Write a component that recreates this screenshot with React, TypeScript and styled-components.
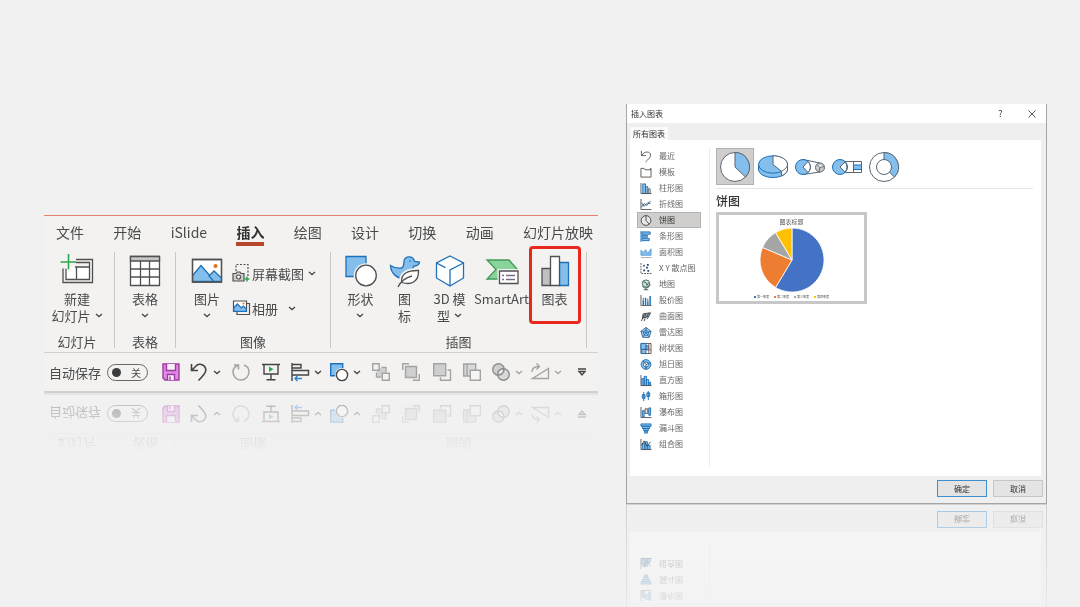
import React from 'react';
import styled, { createGlobalStyle, css } from 'styled-components';

const GlobalStyle = createGlobalStyle`
  * { box-sizing: border-box; }
  body {
    margin: 0;
    background: #f1f1f1;
    overflow: hidden;
    font-family: "Noto Sans CJK SC", "Noto Sans", sans-serif;
    color: #4a4a4a;
  }
  button {
    font: inherit;
    color: inherit;
    border: 0;
    padding: 0;
    margin: 0;
    background: none;
  }
  svg { display: block; overflow: visible; flex: none; }
`;

const Page = styled.main`
  display: grid;
  grid-template-columns: 554fr 421fr;
  gap: 28px;
  align-items: start;
  min-height: 100vh;
  padding: 104px 33px 0 44px;
`;

/* ---------- Ribbon ---------- */

const Ribbon = styled.section`
  margin-top: 111px;
  background: #f3f2f1;
  border-bottom: 2px solid #d3d1d0;
  font-size: 13px;
  line-height: 17px;
  -webkit-box-reflect: below 0
    linear-gradient(to top, rgba(0, 0, 0, 0.38), rgba(0, 0, 0, 0.22) 28px, rgba(0, 0, 0, 0.12) 44px, transparent 58px);
`;

const Tabs = styled.nav`
  display: flex;
  justify-content: space-between;
  padding: 6px 5px 4px 12px;
  border-top: 1px solid #e8806e;
`;

const Tab = styled.button<{ $active?: boolean }>`
  font-size: 14px;
  line-height: 20px;
  border-bottom: 4px solid transparent;
  ${(p) =>
    p.$active &&
    css`
      font-weight: 700;
      color: #333;
      border-color: #b7472a;
    `}
`;

const Groups = styled.div`
  display: flex;
  height: 102px;
  padding-right: 11px;
`;

const Group = styled.div<{ $weight: number }>`
  flex: ${(p) => p.$weight} 1 0;
  min-width: 0;
  display: flex;
  flex-direction: column;
  justify-content: space-between;
  padding-top: 6px;
  &:first-child { padding-right: 4px; }
`;

const GroupTools = styled.div`
  display: flex;
  justify-content: center;
  align-items: flex-start;
`;

const GroupName = styled.div`
  text-align: center;
  line-height: 20px;
`;

const Divider = styled.span`
  width: 1px;
  margin: 2px 0 4px;
  background: #c9c7c6;
`;

const BigButton = styled.button<{ $width: number; $marked?: boolean }>`
  position: relative;
  display: flex;
  flex-direction: column;
  align-items: center;
  gap: 4px;
  width: ${(p) => p.$width}px;
  white-space: nowrap;
  ${(p) =>
    p.$marked &&
    css`
      &::after {
        content: '';
        position: absolute;
        inset: -10px -2px -17px;
        border: 3px solid #e8271d;
        border-radius: 4px;
      }
    `}
`;

const Lines = styled.span`
  display: flex;
  flex-direction: column;
  align-items: center;
`;

const Line = styled.span`
  display: flex;
  align-items: center;
  gap: 4px;
  height: 17px;
`;

const SmallTools = styled.div`
  display: flex;
  flex-direction: column;
  gap: 15px;
  padding: 7px 4px 0 5px;
`;

const SmallButton = styled.button<{ $gap: number }>`
  display: flex;
  align-items: center;
  gap: 3px;
  height: 20px;
  white-space: nowrap;
  & > svg:last-child { margin-left: ${(p) => p.$gap}px; }
`;

const QuickBar = styled.div`
  display: flex;
  align-items: center;
  justify-content: space-between;
  height: 39px;
  padding: 0 5px;
  border-top: 1px solid #d3d1d0;
`;

const AutoSave = styled.label`
  display: flex;
  align-items: center;
  gap: 6px;
  margin-right: 3px;
`;

const Switch = styled.span`
  display: flex;
  align-items: center;
  justify-content: space-between;
  width: 41px;
  height: 17px;
  padding: 0 6px 0 4px;
  border: 1px solid #666;
  border-radius: 9px;
  font-size: 10px;
`;

const SwitchInput = styled.input`
  appearance: none;
  width: 9px;
  height: 9px;
  margin: 0;
  border-radius: 50%;
  background: #3d3d3d;
`;

const QuickButton = styled.button<{ $split?: boolean; $dim?: boolean }>`
  display: flex;
  align-items: center;
  justify-content: ${(p) => (p.$split ? 'space-between' : 'center')};
  width: ${(p) => (p.$split ? 31 : 22)}px;
  height: 22px;
  color: ${(p) => (p.$dim ? '#a3a3a3' : '#444')};
`;

/* ---------- Dialog ---------- */

const Dialog = styled.section`
  background: #efefef;
  border: solid #a5a5a5;
  border-width: 0 1px 1px;
  font-size: 8px;
  line-height: 12px;
  color: #333;
  -webkit-box-reflect: below 0 linear-gradient(to top, rgba(0, 0, 0, 0.42), rgba(0, 0, 0, 0.12) 104px);
`;

const TitleBar = styled.header`
  display: flex;
  align-items: center;
  height: 19px;
  padding: 0 10px 0 4px;
  background: #fff;
`;

const Title = styled.h1`
  flex: 1;
  margin: 0;
  font-size: 8px;
  line-height: 16px;
  font-weight: 400;
`;

const TitleButton = styled.button`
  display: grid;
  place-items: center;
  width: 9px;
  margin-left: 22px;
  font-size: 9px;
`;

const DialogTab = styled.button`
  display: block;
  height: 13px;
  margin: 4px 0 0 3px;
  padding: 0 3px;
  background: #fafafa;
`;

const Panel = styled.div`
  display: flex;
  height: 336px;
  margin: 0 5px 0 3px;
  padding: 8px 8px 10px 7px;
  background: #fff;
`;

const Sidebar = styled.ul`
  width: 73px;
  margin: 0;
  padding: 0 8px 0 0;
  border-right: 1px solid #ececec;
  list-style: none;
`;

const SideItem = styled.button<{ $selected?: boolean }>`
  display: flex;
  align-items: center;
  gap: 7px;
  width: 100%;
  height: 16px;
  padding: 0 2px;
  border: 1px solid ${(p) => (p.$selected ? '#b3b1b1' : 'transparent')};
  background: ${(p) => (p.$selected ? '#cfcecd' : 'none')};
  color: ${(p) => (p.$selected ? '#333' : '#666')};
  white-space: nowrap;
`;

const Content = styled.div`
  flex: 1;
  padding-left: 6px;
`;

const TypeRow = styled.div`
  display: flex;
  padding-bottom: 3px;
  border-bottom: 1px solid #e6e6e6;
`;

const TypeButton = styled.button<{ $selected?: boolean }>`
  display: grid;
  place-items: center;
  width: ${(p) => (p.$selected ? 38 : 37)}px;
  height: 37px;
  border: 1px solid ${(p) => (p.$selected ? '#b3b1b1' : 'transparent')};
  background: ${(p) => (p.$selected ? '#cfcecd' : 'none')};
`;

const Heading = styled.h2`
  margin: 4px 0 3px;
  font-size: 12px;
  line-height: 16px;
  font-weight: 500;
`;

const Preview = styled.figure`
  display: flex;
  flex-direction: column;
  align-items: center;
  width: 151px;
  height: 92px;
  margin: 0;
  padding-top: 2px;
  border: 3px solid #c8c7c7;
  background: #fff;
`;

const PreviewTitle = styled.figcaption`
  font-size: 6px;
  line-height: 10px;
  color: #555;
`;

const Legend = styled.div`
  display: flex;
  gap: 5px;
  margin-top: 1px;
  font-size: 3px;
  line-height: 6px;
  color: #555;
`;

const LegendItem = styled.span<{ $color: string }>`
  display: flex;
  align-items: center;
  gap: 1px;
  &::before {
    content: '';
    width: 2px;
    height: 2px;
    background: ${(p) => p.$color};
  }
`;

const Footer = styled.footer`
  display: flex;
  justify-content: flex-end;
  gap: 6px;
  padding: 4px 3px 6px;
`;

const DialogButton = styled.button<{ $primary?: boolean }>`
  width: 50px;
  height: 17px;
  border: 1px solid ${(p) => (p.$primary ? '#3f8fce' : '#c6c6c6')};
  background: #e4e4e4;
`;

/* ---------- Icons ---------- */

const BLUE = '#83beec';
const EDGE = '#1e70b8';
const INK = '#505050';

const Chevron = () => (
  <svg width="8" height="5" viewBox="0 0 8 5" fill="none" stroke="currentColor" strokeWidth="1.3">
    <path d="M1 1l3 2.6L7 1" />
  </svg>
);

const Big = ({ children }: { children: React.ReactNode }) => (
  <svg width="30" height="30" viewBox="0 0 30 30" fill="none" stroke={INK} strokeWidth="1.3">
    {children}
  </svg>
);

const NewSlideIcon = () => (
  <Big>
    <path d="M4 11h23v13H4z" fill="#fff" stroke="none" />
    <path d="M14 3.500h16.500v23H1V12.500M14 6.500h13.500v17H4V12.500M13 11h14.500M14.500 11v12.500" />
    <path d="M6.500 -2v15.500M-1.500 6h15.500" stroke="#2ca84a" strokeWidth="1.600" />
  </Big>
);

const TableIcon = () => (
  <Big>
    <path d="M.5.500h29v29H.5z" fill="#fff" />
    <path d="M.5.500h29v4.500H.5z" fill="#c9c7c6" />
    <path d="M.5 13h29M.5 21h29M10.500 5v24.500M19.500 5v24.500" />
  </Big>
);

const PictureIcon = () => (
  <Big>
    <path d="M.5 3.500h29v22.500H.5z" fill="#fff" />
    <path d="M.6 19.500L9 9.500l14 16H.6z" fill={BLUE} stroke={EDGE} />
    <path d="M17 20l5-5 7.400 7v3.400h-7.500z" fill={BLUE} stroke={EDGE} />
    <circle cx="23.500" cy="10" r="2" fill="#e0701c" stroke="none" />
    <path d="M.5 3.500h29v22.500H.5z" />
  </Big>
);

const ShapesIcon = () => (
  <Big>
    <path d="M0 .5h20v20H0z" fill={BLUE} stroke={EDGE} />
    <circle cx="20" cy="19.500" r="12.300" fill="#f3f2f1" stroke="none" />
    <circle cx="20" cy="19.500" r="10.300" fill="#fff" />
  </Big>
);

const DuckLeafIcon = () => (
  <Big>
    <path
      d="M.5 9.500c4 2.500 8 3 11 2.500 3-1 2-3.500 2.500-7C15-.2 23-.8 24.500 5.500l5 .5c0 2.500-3 4-5.500 4l-2 4-8 8.500c-6 0-13-4-13.500-13z"
      fill={BLUE}
      stroke={EDGE}
    />
    <path
      d="M28.500 14.500c-10-.3-18.500 3-16.500 12 9.500 3 17-1 16.500-12z"
      fill="#f3f2f1"
      stroke="#f3f2f1"
      strokeWidth="5"
    />
    <path d="M28.500 14.500c-10-.3-18.500 3-16.500 12 9.500 3 17-1 16.500-12z" fill="#fff" />
    <path d="M8 31c3-6 8-9.500 14-11" />
    <circle cx="20" cy="5" r=".8" fill={EDGE} stroke="none" />
  </Big>
);

const CubeIcon = () => (
  <Big>
    <path d="M15 0l13.500 7v15L15 30 1.500 22V7z" fill="#fff" stroke={EDGE} />
    <path d="M1.500 7l9 4.700M15 30V14l13.500-7" stroke={EDGE} />
  </Big>
);

const SmartArtIcon = () => (
  <Big>
    <path d="M0 4h22l8 9v10H0l9-9.500z" fill="#8ad39a" stroke="#3f9b57" />
    <path d="M12.500 15h18.500v12.500H12.500z" fill="#f3f2f1" stroke="#f3f2f1" strokeWidth="4" />
    <path d="M12.500 15h18.500v12.500H12.500z" fill="#fff" />
    <path d="M15 19.500h2m2 0h9M15 23.500h2m2 0h9" stroke="#7d6b8e" />
  </Big>
);

const ChartIcon = () => (
  <Big>
    <path d="M2 12.500h8.500v17H2z" fill="#c2c0bf" />
    <path d="M19.500 6.500h9v23h-9z" fill={BLUE} stroke={EDGE} />
    <path d="M10.500 .5h9v29h-9z" fill="#fff" />
  </Big>
);

const ScreenshotIcon = () => (
  <svg width="16" height="18" viewBox="0 0 16 18" fill="none" stroke={INK} strokeWidth="1.200">
    <path d="M3 7V.5h12V12" strokeDasharray="2 1.500" />
    <path d="M0 9.500h3l1-1.500h3l1 1.500h3V17H0z" fill="#cfcdcc" />
    <circle cx="5.500" cy="13" r="2" fill="#fff" />
    <path d="M14 12.500v5M11.500 15h5" stroke="#2ca84a" strokeWidth="1.500" />
  </svg>
);

const AlbumIcon = () => (
  <svg width="16" height="16" viewBox="0 0 16 16" fill="none" stroke={INK} strokeWidth="1.200">
    <path d="M13.500 3.500H16.500V14.500H4V12" />
    <path d="M.5 1h13v10.500H.5z" fill="#fff" />
    <path d="M.8 8l3.500-4 4 4 2-2 3 3v2.300H.8z" fill={BLUE} stroke={EDGE} />
    <circle cx="10.500" cy="3.500" r="1" fill="#e0701c" stroke="none" />
  </svg>
);

const Quick = ({ children, stroke = 'currentColor' }: { children: React.ReactNode; stroke?: string }) => (
  <svg width="18" height="18" viewBox="0 0 18 18" fill="none" stroke={stroke} strokeWidth="1.400">
    {children}
  </svg>
);

const SaveIcon = () => (
  <Quick stroke="#a03aa5">
    <path d="M1 1h16v16H3l-2-2z" fill="#dc8be0" />
    <path d="M4.500 1v6.500h9V1" fill="#f7f0f7" />
    <path d="M5.500 17v-5.500h7V17" fill="#f7f0f7" />
    <path d="M8 13.500V17" />
  </Quick>
);

const UndoIcon = () => (
  <Quick>
    <path d="M1.500 1v6.500H8M2 7l4.500-4.500C10-.2 16 2 15.800 7.500 15.700 10 14 12 8.500 17.500" strokeWidth="1.600" />
  </Quick>
);

const RedoIcon = () => (
  <Quick>
    <path d="M2 2h4.500v4.500M6 2.500C2 4 .8 7 1 9.500c.4 4.500 4 7.500 8 7.500s8-3.500 8-8c0-3-2-6-5-7" strokeWidth="1.500" />
  </Quick>
);

const PresentIcon = () => (
  <Quick>
    <path d="M0 1.500h18M2 1.500v9.500h14V1.500M9 11v5.500M4.500 16.800h9" />
    <path d="M7 3.500l4.500 2.700L7 9z" fill="#2ca84a" stroke="none" />
  </Quick>
);

const AlignIcon = () => (
  <Quick>
    <path d="M1 0v18M1 1.500h9V5H1M1 7.500h16.500v4.500H1" />
    <path d="M4 15.500h7M6.500 13L4 15.500 6.500 18" stroke="#2a86d0" />
  </Quick>
);

const MiniShapesIcon = () => (
  <Quick>
    <path d="M.7.700h12v12H.7z" fill={BLUE} stroke={EDGE} />
    <circle cx="12" cy="12" r="7" fill="#f3f2f1" stroke="none" />
    <circle cx="12" cy="12" r="5.600" fill="#fff" />
  </Quick>
);

const RegroupIcon = () => (
  <Quick>
    <path d="M9.500 4.500h4.500v5M4.500 9.500V14h5" />
    <path d="M5 5h8v8H5z" fill="#cfcfcf" stroke="none" />
    <path d="M.7.700h6.500v6.500H.7zM10.300 10.300h7v7h-7z" fill="#f3f2f1" />
  </Quick>
);

const BringFrontIcon = () => (
  <Quick>
    <path d="M7 .7H.7V7M17.300 11v6.300h-6.500" />
    <path d="M3.500 3.500h11v11h-11z" fill="#cfcfcf" />
  </Quick>
);

const BringForwardIcon = () => (
  <Quick>
    <path d="M14.500 7h3v10.300h-10v-3" />
    <path d="M.7.700h12v12H.7z" fill="#cfcfcf" />
  </Quick>
);

const SendBackIcon = () => (
  <Quick>
    <path d="M.7 1h12v12H.7z" fill="#d8d8d8" />
    <path d="M7.300 7.300h10v10h-10z" fill="#f6f5f4" />
    <path d="M4 1v12" />
  </Quick>
);

const MergeIcon = () => (
  <Quick stroke="#8d8d8d">
    <circle cx="6.500" cy="6.500" r="5.800" fill="#cfcfcf" />
    <circle cx="11.500" cy="11.500" r="5.800" fill="#cfcfcf" fillOpacity=".7" />
    <path d="M11.900 5.700a5.800 5.800 0 0 1-6.200 6.200 5.800 5.800 0 0 1 6.200-6.200z" fill="#f3f2f1" />
  </Quick>
);

const RotateIcon = () => (
  <Quick>
    <path d="M17.500 5.500v10H1.500z" />
    <path d="M1 9c0-4 2-5.500 7-5.500M5.500.5l3 3-3 3" />
  </Quick>
);

const MoreIcon = () => (
  <svg width="10" height="8" viewBox="0 0 10 8" fill="none" stroke="currentColor" strokeWidth="1.400">
    <path d="M1 1h8M2 3.500h6L5 7z" />
  </svg>
);

const Axis = () => <path d="M.5 0v11.500H12" stroke="#555" />;

const sideArt: Record<string, React.ReactNode> = {
  最近: <path d="M1 0v5H6M1.500 4.500C4 0 11 0 11 4.500 11 7 8.500 9 5.500 12" stroke="#555" />,
  模板: <path d="M.5 1.500H4l1 1.500h6V1.500h.5v9.500H.5z" stroke="#555" />,
  柱形图: (
    <>
      <path d="M2.500 1h3v10.500h-3z" fill={BLUE} />
      <path d="M5.500 4H8v7.500H5.500z" fill={BLUE} />
      <path d="M8.500 6.500h2v5h-2z" fill="#fff" stroke="#555" />
      <Axis />
    </>
  ),
  折线图: (
    <>
      <path d="M1 9l3-4 3 2 4-5" />
      <path d="M1 4l3 4 4-4 3 1" stroke="#555" />
      <Axis />
    </>
  ),
  饼图: (
    <>
      <circle cx="6" cy="6" r="5.300" fill="#e8e8e8" stroke="#444" />
      <path d="M6 .7V6l3.500 4" stroke="#444" />
    </>
  ),
  条形图: <path d="M1.500 1h9v2.500h-9zM1.500 4.800h6v2h-6zM1.500 8h8v2.500h-8zM.5 0v12" fill={BLUE} />,
  面积图: (
    <>
      <path d="M.5 9V3.500L3 6l2.500-3L8 7l3.500-5v7z" fill={BLUE} stroke="#5a9fd6" />
      <path d="M.5 11.500H12" stroke="#aaa" />
    </>
  ),
  'X Y 散点图': (
    <>
      <path d="M3 3h1.500M7 2h2M6 5h2M3 8h2M7.500 8.500h2" stroke="#26476b" strokeWidth="2" />
      <path d="M.5 0v11.500H12" stroke="#555" strokeDasharray="2 1" />
    </>
  ),
  地图: (
    <>
      <circle cx="6" cy="5" r="4" fill="#cfe3d8" stroke="#3c5f59" />
      <path d="M3 3l3 1 1 3 2-3M2 8c2 3 8 2 8.500-2M6 10v2M3.500 11.700h5" stroke="#3c5f59" />
    </>
  ),
  股价图: (
    <>
      <path d="M3 6v5M5.500 3v8M8 7v4M10.500 1v10" strokeWidth="1.600" />
      <path d="M3 3v3M8 4v3" stroke="#555" />
      <Axis />
    </>
  ),
  曲面图: (
    <>
      <path d="M3 3l8-1-2 4-7 2z" fill="#8aa9bb" stroke="#444" />
      <path d="M1 11l3-7M5 8l-1 3M9 6L7 9M6 2.500L4.500 7M9 2L7 6.500" stroke="#444" />
    </>
  ),
  雷达图: (
    <>
      <path d="M6 .5l5.500 4.200-2 6.600h-7l-2-6.600z" fill="#b6d9f2" stroke="#38607f" />
      <path d="M6 3l3 2.500L8 9H4L3 5.500zM6 .5V6M11.500 4.700L6 6l3.500 5M2.500 11L6 6 .5 4.700" />
    </>
  ),
  树状图: (
    <>
      <path d="M.5.500h11v11H.5z" fill="#fff" stroke="#555" />
      <path d="M.5.500H6V7H.5zM6 3h3v4H6zM1 7h5v4.500H1z" fill={BLUE} />
      <path d="M9 .5v11M6 7.500h5.500" stroke="#8a5a4a" />
    </>
  ),
  旭日图: (
    <>
      <circle cx="6" cy="6" r="5.300" fill={BLUE} />
      <circle cx="6" cy="6" r="2.800" fill="#fff" />
      <path d="M6 6l5-2M6 6v5.300M6 6L2.500 2" stroke="#3b5568" />
    </>
  ),
  直方图: (
    <>
      <path d="M1.500 4h2.500v7.500H1.500zM4 1.500h2.500v10H4zM6.500 5H9v6.500H6.500zM9 8h2v3.500H9z" fill={BLUE} />
      <Axis />
    </>
  ),
  箱形图: <path d="M3.500 1v10M2 4h3v4H2zM8.500 0v10M7 2h3v4H7z" fill={BLUE} />,
  瀑布图: (
    <>
      <path d="M2 4h2v7H2zM9 1h2v8H9z" fill={BLUE} />
      <path d="M5 2h3v5H5z" fill="#ddd" stroke="#555" />
      <Axis />
    </>
  ),
  漏斗图: <path d="M.5 1h11v2.500H.5zM2 3.500h8V6H2zM3.500 6h5v2.500h-5zM4.500 8.500h3V11h-3z" fill={BLUE} />,
  组合图: (
    <>
      <path d="M2 5h2.500v6.500H2zM5 3h2.500v8.500H5zM8 7h2.500v4.500H8z" fill={BLUE} />
      <path d="M1 7l3-5 3 6 4-5" stroke="#444" />
      <Axis />
    </>
  ),
};

const SideIcon = ({ name }: { name: string }) => (
  <svg width="12" height="11" viewBox="0 0 12 12" fill="none" stroke={EDGE} strokeWidth="1">
    {sideArt[name]}
  </svg>
);

const TypeArt = ({ children }: { children: React.ReactNode }) => (
  <svg width="30" height="30" viewBox="0 0 30 30" fill="#fff" stroke="#5b6670" strokeWidth="1">
    {children}
  </svg>
);

const chartTypes: { name: string; art: React.ReactNode }[] = [
  {
    name: '饼图',
    art: (
      <>
        <circle cx="15" cy="15" r="14.500" />
        <path d="M15 .5a14.500 14.500 0 0 1 10.500 24.500L15 15z" fill={BLUE} />
      </>
    ),
  },
  {
    name: '三维饼图',
    art: (
      <>
        <path d="M.5 12.500v4.500c0 5 6.500 8.500 14.500 8.500S29.500 22 29.500 17v-4.500z" fill={BLUE} stroke={EDGE} />
        <ellipse cx="15" cy="12.500" rx="14.500" ry="8.700" fill={BLUE} stroke={EDGE} />
        <path d="M15 3.800c8 0 14.500 3.900 14.500 8.700v4.500c0 3-2 5-6 6.800v-4.500L15 12.500z" />
        <path d="M29.500 12.500c0 2.500-2.500 5-6 6.800" fill="none" />
      </>
    ),
  },
  {
    name: '子母饼图',
    art: (
      <>
        <path d="M8 7.500l17 3.500v9l-17 2.500z" />
        <circle cx="8" cy="15" r="7.500" fill={BLUE} stroke={EDGE} />
        <path d="M8 15l5-5.500a7.500 7.500 0 0 1 0 11z" />
        <circle cx="25" cy="15.500" r="4.500" fill="#ccc" />
        <path d="M22 12.500l3 3 4-1M25 15.500l-1 4" />
      </>
    ),
  },
  {
    name: '复合条饼图',
    art: (
      <>
        <path d="M8 9.500h21.500v11H8z" />
        <circle cx="8" cy="15" r="7.500" fill={BLUE} stroke={EDGE} />
        <path d="M8 15l5-5a7.500 7.500 0 0 1 0 10z" />
        <path d="M21.500 13h8v4.500h-8z" fill={BLUE} stroke={EDGE} />
        <path d="M21.500 9.500v11" />
      </>
    ),
  },
  {
    name: '圆环图',
    art: (
      <>
        <circle cx="15" cy="15" r="14.500" />
        <path d="M15 .5a14.500 14.500 0 0 1 10.500 24.500L15 15z" fill={BLUE} />
        <circle cx="15" cy="15" r="7.500" />
      </>
    ),
  },
];

const series = [
  { name: '第一季度', value: 8.2, color: '#4472c4' },
  { name: '第二季度', value: 3.2, color: '#ed7d31' },
  { name: '第三季度', value: 1.4, color: '#a5a5a5' },
  { name: '第四季度', value: 1.2, color: '#ffc000' },
];

const PieChart = () => {
  const total = series.reduce((sum, s) => sum + s.value, 0);
  const point = (v: number) => {
    const a = (v / total) * Math.PI * 2;
    return `${33 + 32 * Math.sin(a)} ${33 - 32 * Math.cos(a)}`;
  };
  let start = 0;
  return (
    <svg width="66" height="66" viewBox="0 0 66 66" stroke="#fff" strokeWidth=".8">
      {series.map((s) => {
        const from = start;
        start += s.value;
        const large = s.value > total / 2 ? 1 : 0;
        return (
          <path key={s.name} fill={s.color} d={`M33 33L${point(from)}A32 32 0 ${large} 1 ${point(start)}z`} />
        );
      })}
    </svg>
  );
};

/* ---------- Composition ---------- */

const ribbonTabs = ['文件', '开始', 'iSlide', '插入', '绘图', '设计', '切换', '动画', '幻灯片放映'];

type ToolProps = { icon: React.ReactNode; lines: string[]; width: number; menu?: boolean; marked?: boolean };

/* An empty last line carries only the menu arrow. */
const Tool = ({ icon, lines, width, menu, marked }: ToolProps) => (
  <BigButton type="button" $width={width} $marked={marked}>
    {icon}
    <Lines>
      {lines.map((text, i) => (
        <Line key={i}>
          {text}
          {menu && i === lines.length - 1 && <Chevron />}
        </Line>
      ))}
    </Lines>
  </BigButton>
);

const quickTools: { name: string; icon: React.ReactNode; split?: boolean; dim?: boolean }[] = [
  { name: '保存', icon: <SaveIcon /> },
  { name: '撤消', icon: <UndoIcon />, split: true },
  { name: '重复', icon: <RedoIcon />, dim: true },
  { name: '从头开始', icon: <PresentIcon /> },
  { name: '对齐', icon: <AlignIcon />, split: true },
  { name: '形状', icon: <MiniShapesIcon />, split: true },
  { name: '组合', icon: <RegroupIcon />, dim: true },
  { name: '置于顶层', icon: <BringFrontIcon />, dim: true },
  { name: '上移一层', icon: <BringForwardIcon />, dim: true },
  { name: '下移一层', icon: <SendBackIcon />, dim: true },
  { name: '合并形状', icon: <MergeIcon />, split: true, dim: true },
  { name: '旋转', icon: <RotateIcon />, split: true, dim: true },
];

export default function App() {
  return (
    <>
      <GlobalStyle />
      <Page>
        <Ribbon>
          <Tabs>
            {ribbonTabs.map((t) => (
              <Tab key={t} type="button" $active={t === '插入'}>
                {t}
              </Tab>
            ))}
          </Tabs>
          <Groups>
            <Group $weight={66}>
              <GroupTools>
                <Tool icon={<NewSlideIcon />} lines={['新建', '幻灯片']} width={60} menu />
              </GroupTools>
              <GroupName>幻灯片</GroupName>
            </Group>
            <Divider />
            <Group $weight={60}>
              <GroupTools>
                <Tool icon={<TableIcon />} lines={['表格', '']} width={44} menu />
              </GroupTools>
              <GroupName>表格</GroupName>
            </Group>
            <Divider />
            <Group $weight={154}>
              <GroupTools>
                <Tool icon={<PictureIcon />} lines={['图片', '']} width={42} menu />
                <SmallTools>
                  <SmallButton type="button" $gap={1}>
                    <ScreenshotIcon />
                    屏幕截图
                    <Chevron />
                  </SmallButton>
                  <SmallButton type="button" $gap={7}>
                    <AlbumIcon />
                    相册
                    <Chevron />
                  </SmallButton>
                </SmallTools>
              </GroupTools>
              <GroupName>图像</GroupName>
            </Group>
            <Divider />
            <Group $weight={255}>
              <GroupTools>
                <Tool icon={<ShapesIcon />} lines={['形状', '']} width={44} menu />
                <Tool icon={<DuckLeafIcon />} lines={['图', '标']} width={44} />
                <Tool icon={<CubeIcon />} lines={['3D 模', '型']} width={46} menu />
                <Tool icon={<SmartArtIcon />} lines={['SmartArt']} width={58} />
                <Tool icon={<ChartIcon />} lines={['图表']} width={48} marked />
              </GroupTools>
              <GroupName>插图</GroupName>
            </Group>
            <Divider />
          </Groups>
          <QuickBar>
            <AutoSave>
              自动保存
              <Switch>
                <SwitchInput type="checkbox" />关
              </Switch>
            </AutoSave>
            {quickTools.map((q) => (
              <QuickButton key={q.name} type="button" aria-label={q.name} $split={q.split} $dim={q.dim}>
                {q.icon}
                {q.split && <Chevron />}
              </QuickButton>
            ))}
            <QuickButton type="button" aria-label="自定义快速访问工具栏">
              <MoreIcon />
            </QuickButton>
          </QuickBar>
        </Ribbon>

        <Dialog role="dialog" aria-labelledby="dialog-title">
          <TitleBar>
            <Title id="dialog-title">插入图表</Title>
            <TitleButton type="button">?</TitleButton>
            <TitleButton type="button" aria-label="关闭">
              <svg width="8" height="8" viewBox="0 0 8 8" stroke="#555">
                <path d="M.5.500l7 7M7.500.500l-7 7" />
              </svg>
            </TitleButton>
          </TitleBar>
          <DialogTab type="button">所有图表</DialogTab>
          <Panel>
            <Sidebar>
              {Object.keys(sideArt).map((name) => (
                <li key={name}>
                  <SideItem type="button" $selected={name === '饼图'}>
                    <SideIcon name={name} />
                    {name}
                  </SideItem>
                </li>
              ))}
            </Sidebar>
            <Content>
              <TypeRow>
                {chartTypes.map((t, i) => (
                  <TypeButton key={t.name} type="button" aria-label={t.name} $selected={i === 0}>
                    <TypeArt>{t.art}</TypeArt>
                  </TypeButton>
                ))}
              </TypeRow>
              <Heading>饼图</Heading>
              <Preview>
                <PreviewTitle>图表标题</PreviewTitle>
                <PieChart />
                <Legend>
                  {series.map((s) => (
                    <LegendItem key={s.name} $color={s.color}>
                      {s.name}
                    </LegendItem>
                  ))}
                </Legend>
              </Preview>
            </Content>
          </Panel>
          <Footer>
            <DialogButton type="button" $primary>
              确定
            </DialogButton>
            <DialogButton type="button">取消</DialogButton>
          </Footer>
        </Dialog>
      </Page>
    </>
  );
}
